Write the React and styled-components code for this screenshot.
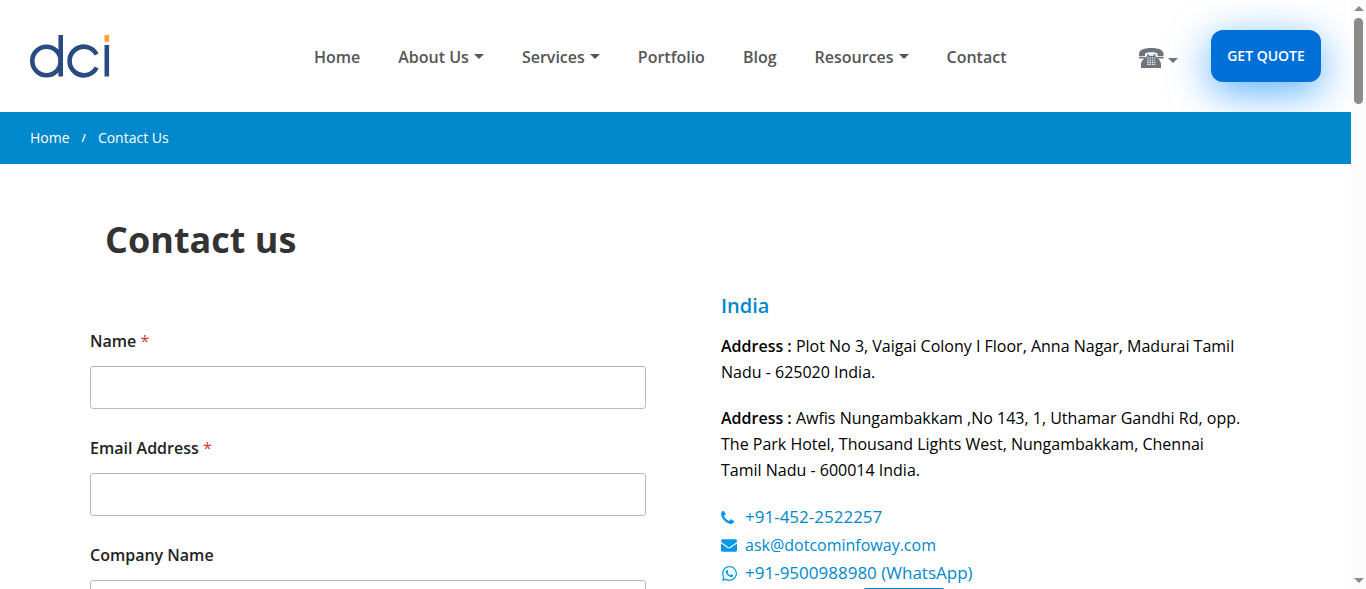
import React from "react";
import styled, { createGlobalStyle } from "styled-components";
import { FaWhatsapp } from "react-icons/fa";

const GlobalStyle = createGlobalStyle`
  * { box-sizing: border-box; }
  body {
    margin: 0;
    background: #fff;
    color: #000;
    font-family: "Open Sans", "Noto Sans", sans-serif;
    font-size: 16px;
    line-height: 26px;
  }
  a { color: inherit; text-decoration: none; }
`;

const Shell = styled.div`
  display: flex;
  height: 100vh;
  overflow: hidden;
`;

const Page = styled.div`
  flex: 1;
  min-width: 0;
  overflow: hidden;
`;

const ScrollTrack = styled.div`
  display: flex;
  flex-direction: column;
  align-items: center;
  width: 15px;
  padding: 6px 0;
  background: #fcfcfc;
`;

const ScrollArrow = styled.span`
  border: 5px solid transparent;
  border-width: ${(p) => (p.$down ? "5px 5px 0" : "0 5px 5px")};
  border-color: #8b8b8b transparent;
  margin-top: ${(p) => (p.$down ? "auto" : "0")};
`;

const ScrollThumb = styled.span`
  width: 9px;
  height: 86px;
  margin-top: 7px;
  border-radius: 5px;
  background: #8b8b8b;
`;

const Header = styled.header`
  display: grid;
  grid-template-columns: 284px 1fr auto;
  align-items: start;
  height: 112px;
  padding: 30px 30px 0;
`;

const Logo = styled.a`
  display: block;
  padding-top: 5px;
  svg { display: block; }
`;

const Nav = styled.nav`
  display: flex;
  gap: 38px;
  padding-top: 14px;
`;

const NavLink = styled.a`
  display: flex;
  align-items: center;
  gap: 5px;
  color: #555;
  font-weight: 600;
  white-space: nowrap;
`;

const Caret = styled.span`
  margin-bottom: 2px;
  border: 5px solid transparent;
  border-top-color: currentColor;
  border-bottom: 0;
`;

const Actions = styled.div`
  display: flex;
  gap: 33px;
`;

const PhoneMenu = styled.button`
  display: flex;
  align-items: center;
  gap: 4px;
  height: 56px;
  padding: 0;
  border: 0;
  background: none;
  color: #6c757d;
  ${Caret} { margin: 5px 0 0; }
`;

const QuoteButton = styled.button`
  width: 110px;
  height: 52px;
  padding: 0;
  border: 0;
  border-radius: 12px;
  background: #0070d8;
  box-shadow: 0 10px 40px rgba(0, 132, 255, 0.65);
  color: #fff;
  font: 600 14px/20px "Open Sans", sans-serif;
`;

const Breadcrumb = styled.nav`
  position: relative;
  display: flex;
  align-items: center;
  gap: 12px;
  height: 52px;
  padding: 0 30px;
  background: #0088cc;
  color: #fff;
  font-size: 14px;
`;

const Slash = styled.span`
  font-size: 11px;
  font-weight: 600;
`;

const Container = styled.main`
  max-width: 1171px;
  margin: 0 auto;
`;

const Title = styled.h1`
  margin: 0;
  padding: 52px 15px 0;
  color: #333;
  font-size: 36px;
  font-weight: 700;
  line-height: 48px;
`;

const Columns = styled.div`
  display: grid;
  grid-template-columns: 556fr 540fr;
  gap: 75px;
  padding-top: 29px;
`;

const Form = styled.form`
  display: flex;
  flex-direction: column;
  gap: 26px;
  padding-top: 35px;
`;

const Field = styled.label`
  display: flex;
  flex-direction: column;
  gap: 12px;
  color: #222;
  font-weight: 600;
`;

const Required = styled.span`
  color: #d63637;
  font-weight: 400;
`;

const TextInput = styled.input`
  width: 100%;
  height: 43px;
  padding: 0 12px;
  border: 1px solid #bbb;
  border-radius: 3px;
  font: inherit;
`;

const Region = styled.h2`
  margin: 0 0 14px;
  color: #0088cc;
  font-size: 20px;
  font-weight: 600;
  line-height: 26px;
`;

const Address = styled.p`
  margin: 0 0 20px;
  strong { font-weight: 600; }
`;

const Contacts = styled.ul`
  margin: 0;
  padding: 0;
  list-style: none;
`;

const ContactItem = styled.li`
  display: grid;
  grid-template-columns: 24px 1fr;
  align-items: center;
  height: 28px;
  color: #0088cc;
  font-size: ${(p) => (p.$tel ? "17px" : "16px")};
  svg { display: block; color: #0099e8; }
`;

const Tab = styled.div`
  width: 82px;
  height: 40px;
  margin: 1px 0 0 142px;
  border-radius: 3px;
  background: #0088cc;
`;

const links = [
  { label: "Home" },
  { label: "About Us", menu: true },
  { label: "Services", menu: true },
  { label: "Portfolio" },
  { label: "Blog" },
  { label: "Resources", menu: true },
  { label: "Contact" },
];

const fields = [
  { label: "Name", type: "text", required: true },
  { label: "Email Address", type: "email", required: true },
  { label: "Company Name", type: "text" },
];

function LogoMark() {
  return (
    <svg width="81" height="44" viewBox="0 0 81 44" fill="none" stroke="#294b80" strokeWidth="4.6" aria-hidden="true">
      <circle cx="16.5" cy="26" r="14.2" />
      <path d="M30.700 0V41.500" />
      <path d="M66.600 19.500A14.300 14.300 0 1 0 66.600 32.500" />
      <path d="M76.800 10V41.500" />
      <path d="M76.800 0V6.800" stroke="#f9a02f" />
    </svg>
  );
}

function TelephoneIcon() {
  return (
    <svg width="25" height="21" viewBox="0 0 25 21" aria-hidden="true">
      <path fill="currentColor" d="M0 8.300V6C0 2 5 0 12.300 0S24.500 2 24.500 6V8.300H18.500V5.600C17 4.500 15 4.200 12.300 4.200S7.500 4.500 6 5.600V8.300Z" />
      <path fill="currentColor" d="M0 9H6V10.500H0ZM18.500 9H24.500V10.500H18.500ZM8 6.200H9.800V7.700H14.700V6.200H16.500V8C19 10.500 22 12.500 22 16.500V20H2V16.500C2 12.500 5.500 10.500 8 8Z" />
      <path stroke="#fff" strokeWidth="1.100" strokeDasharray="1.400 .9" d="M8.300 10H16.300M8.300 12.200H16.300M8.300 14.400H16.300M8.300 16.400H16.300" />
    </svg>
  );
}

function PhoneIcon() {
  return (
    <svg width="13" height="13" viewBox="0 128 1408 1408" fill="currentColor" aria-hidden="true">
      <path d="M1408 1240q0 27-10 70.5t-21 68.5q-21 50-122 106-94 51-186 51-27 0-52.5-3.5t-57.5-12.5-47.5-14.5-55.5-20.5-49-18q-98-35-175-83-128-79-264.5-215.5t-215.5-264.5q-48-77-83-175-3-9-18-49t-20.5-55.5-14.500-47.500-12.500-57.500-3.500-52.500q0-92 51-186 56-101 106-122 25-11 68.500-21t70.500-10q14 0 21 3 18 6 53 76 11 19 30 54t35 63.500 31 53.500q3 4 17.500 25t21.500 35.500 7 28.500q0 20-28.500 50t-62 55-62 53-28.500 46q0 9 5 22.500t8.500 20.500 14 24 11.500 19q76 137 174 235t235 174q2 1 19 11.500t24 14 20.500 8.500 22.500 5q18 0 46-28.500t53-62 55-62 50-28.500q14 0 28.500 7t35.500 21.500 25 17.500q25 15 53.500 31t63.500 35 54 30q70 35 76 53 3 7 3 21z" />
    </svg>
  );
}

function EnvelopeIcon() {
  return (
    <svg width="16" height="13" viewBox="0 256 1792 1408" fill="currentColor" aria-hidden="true">
      <path d="M1792 710v794q0 66-47 113t-113 47h-1472q-66 0-113-47t-47-113v-794q44 49 101 87 362 246 497 345 57 42 92.5 65.5t94.5 48 110 24.5h2q51 0 110-24.5t94.5-48 92.5-65.5q170-123 498-345 57-39 100-87zm0-294q0 79-49 151t-122 123q-376 261-468 325-10 7-42.5 31t-54 38.5-52 32.5-57.5 27-50 9h-2q-23 0-50-9t-57.5-27-52-32.5-54-38.5-42.5-31q-91-64-262-182.5t-205-142.5q-62-42-117-115.5t-55-136.5q0-78 41.5-130t118.5-52h1472q65 0 112.5 47t47.5 113z" />
    </svg>
  );
}

export default function App() {
  return (
    <Shell>
      <GlobalStyle />
      <Page>
        <Header>
          <Logo href="#" aria-label="dci"><LogoMark /></Logo>
          <Nav>
            {links.map(({ label, menu }) => (
              <NavLink key={label} href="#">
                {label}
                {menu && <Caret />}
              </NavLink>
            ))}
          </Nav>
          <Actions>
            <PhoneMenu type="button" aria-label="Phone numbers">
              <TelephoneIcon />
              <Caret />
            </PhoneMenu>
            <QuoteButton type="button">GET QUOTE</QuoteButton>
          </Actions>
        </Header>
        <Breadcrumb aria-label="Breadcrumb">
          <a href="#">Home</a>
          <Slash>/</Slash>
          <a href="#">Contact Us</a>
        </Breadcrumb>
        <Container>
          <Title>Contact us</Title>
          <Columns>
            <Form>
              {fields.map(({ label, type, required }) => (
                <Field key={label}>
                  <span>
                    {label} {required && <Required>*</Required>}
                  </span>
                  <TextInput type={type} required={required} />
                </Field>
              ))}
            </Form>
            <section>
              <Region>India</Region>
              <Address>
                <strong>Address :</strong> Plot No 3, Vaigai Colony I Floor, Anna Nagar, Madurai Tamil<br />
                Nadu - 625020 India.
              </Address>
              <Address>
                <strong>Address :</strong> Awfis Nungambakkam ,No 143, 1, Uthamar Gandhi Rd, opp.<br />
                The Park Hotel, Thousand Lights West, Nungambakkam, Chennai<br />
                Tamil Nadu - 600014 India.
              </Address>
              <Contacts>
                <ContactItem $tel><PhoneIcon /><a href="tel:+914522522257">+91-452-2522257</a></ContactItem>
                <ContactItem><EnvelopeIcon /><a href="mailto:ask@dotcominfoway.com">ask@dotcominfoway.com</a></ContactItem>
                <ContactItem $tel><FaWhatsapp size={17} /><a href="tel:+919500988980">+91-9500988980 (WhatsApp)</a></ContactItem>
              </Contacts>
              <Tab />
            </section>
          </Columns>
        </Container>
      </Page>
      <ScrollTrack aria-hidden="true">
        <ScrollArrow />
        <ScrollThumb />
        <ScrollArrow $down />
      </ScrollTrack>
    </Shell>
  );
}
